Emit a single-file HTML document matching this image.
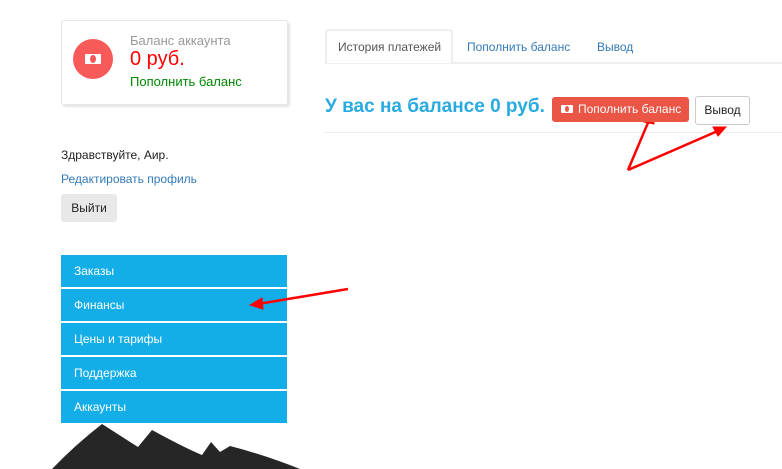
<!DOCTYPE html>
<html><head><meta charset="utf-8"><style>
body{margin:0;width:782px;height:469px;background:#fff;font-family:"Liberation Sans",sans-serif;position:relative;overflow:hidden}
.a{position:absolute}
.card{left:61px;top:20px;width:225px;height:83px;border:1px solid #e6e6e6;border-radius:3px;box-shadow:2px 2px 2px #e4e4e4}
.menu{left:61px;width:226px;height:32px;background:#13aee8;color:#fff;font-size:12px;line-height:32px;text-indent:13px}
</style></head><body>
<div class="a card"></div>
<div class="a" style="left:73px;top:39px;width:40px;height:40px;border-radius:50%;background:#f85959"></div>
<div class="a" style="left:85px;top:54px;width:16px;height:10px;background:#fff;border-radius:1px"></div>
<div class="a" style="left:90px;top:55px;width:6px;height:8px;background:#f85959;border-radius:50%"></div>
<div class="a" style="left:130px;top:33px;font-size:13px;color:#999">Баланс аккаунта</div>
<div class="a" style="left:130px;top:48px;font-size:20px;color:#f00">0 руб.</div>
<div class="a" style="left:130px;top:74px;font-size:13px;color:#080">Пополнить баланс</div>
<div class="a" style="left:61px;top:148px;font-size:12px;color:#222">Здравствуйте, Аир.</div>
<div class="a" style="left:61px;top:172px;font-size:12px;color:#337ab7">Редактировать профиль</div>
<div class="a" style="left:61px;top:194px;width:56px;height:28px;background:#e8e8e8;border-radius:3px;font-size:12px;line-height:28px;text-align:center;color:#222">Выйти</div>
<div class="a menu" style="top:255px">Заказы</div>
<div class="a menu" style="top:289px">Финансы</div>
<div class="a menu" style="top:323px">Цены и тарифы</div>
<div class="a menu" style="top:357px">Поддержка</div>
<div class="a menu" style="top:391px">Аккаунты</div>
<svg class="a" style="left:0;top:0" width="782" height="469">
<path d="M52 469 Q75 445 102 424 L138 447 L152 430 Q185 448 202 455 L211 442 L220 452 L230 446 Q265 455 300 469 Z" fill="#262626"/>
<line x1="325" y1="63" x2="782" y2="63" stroke="#ddd"/>
<path d="M326 63 V33 Q326 30 329 30 H449 Q452 30 452 33 V63" fill="#fff" stroke="#ddd"/>
<line x1="325" y1="132.5" x2="782" y2="132.5" stroke="#eee"/>
<g stroke="#f00" stroke-width="2.5" fill="#f00">
<line x1="628" y1="170" x2="650" y2="118"/><line x1="628" y1="170" x2="720" y2="130"/><line x1="348" y1="289" x2="258" y2="304"/>
<path d="M653 112 L644 122 L654 124Z M726 127 L713 127 L718 136Z M250 305 L262 298 L263 309Z" stroke-width="1"/>
</g>
</svg>
<div class="a" style="left:338px;top:40px;font-size:12px;color:#555">История платежей</div>
<div class="a" style="left:467px;top:40px;font-size:12px;color:#337ab7">Пополнить баланс</div>
<div class="a" style="left:597px;top:40px;font-size:12px;color:#337ab7">Вывод</div>
<div class="a" style="left:325px;top:96px;font-size:19px;font-weight:bold;color:#29aae1">У вас на балансе 0 руб.</div>
<div class="a" style="left:552px;top:97px;width:137px;height:25px;background:#ea5545;border-radius:3px;color:#fff;font-size:12px;line-height:25px;text-indent:26px">Пополнить баланс</div>
<div class="a" style="left:561px;top:105px;width:12px;height:8px;background:#fff;border-radius:1px"></div>
<div class="a" style="left:565px;top:106px;width:4px;height:6px;background:#ea5545;border-radius:50%"></div>
<div class="a" style="left:695px;top:96px;width:53px;height:27px;border:1px solid #ccc;border-radius:3px;font-size:12px;line-height:27px;text-align:center;color:#222">Вывод</div>
</body></html>
